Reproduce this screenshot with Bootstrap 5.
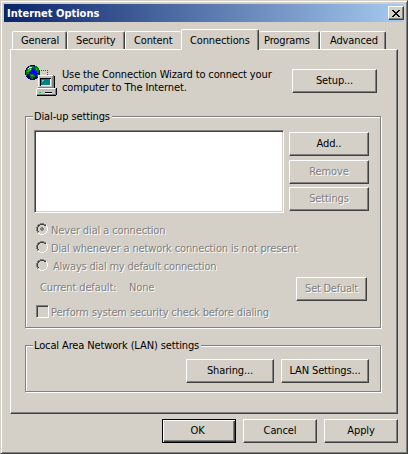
<!DOCTYPE html>
<html lang="en">
<head>
<meta charset="utf-8">
<meta name="viewport" content="width=device-width, initial-scale=1">
<title>Internet Options</title>
<link rel="stylesheet" href="https://cdn.jsdelivr.net/npm/bootstrap@5.3.0/dist/css/bootstrap.min.css">
<style>
:root{--face:#d4d0c8;--lo:#808080;--dk:#404040}
body{background:var(--face);color:#000;font:11px/13px "DejaVu Sans Condensed","Noto Sans",sans-serif;letter-spacing:-.13px;overflow:hidden}
.dialog-win{width:408px;height:454px;padding:3px;border:1px solid;border-color:var(--face) var(--dk) var(--dk) var(--face);box-shadow:inset 1px 1px #fff,inset -1px -1px var(--lo);white-space:nowrap}
.title-bar{height:18px;padding:0 0 0 3px;background:linear-gradient(90deg,#0a246a,#a6caf0);color:#fff;font-weight:700;letter-spacing:0}
.btn.face{flex:none;height:24px;width:80px;padding:0;border:1px solid;border-color:#fff var(--dk) var(--dk) #fff;border-radius:0;background:var(--face);color:#000;font-size:11px;line-height:20px;letter-spacing:-.13px;box-shadow:inset -1px -1px var(--lo)}
.btn.face:disabled,.off{color:var(--lo);opacity:1;text-shadow:1px 1px #fff}
.btn.face.closer{width:16px;height:14px;line-height:0}
.btn.face.w-setup{width:85px}
.btn.face.w-lan{width:88px}
.btn.face.w-foot{width:74px}
.btn.face.w-set{width:71px;letter-spacing:-.25px}
.btn.face.main{padding-right:3px;border-color:#000;box-shadow:inset 1px 1px #fff,inset -1px -1px var(--dk),inset -2px -2px var(--lo)}
.tab-strip{height:20px;margin:7px 0 0 8px}
.tab-strip .nav-link{flex:none;height:18px;padding:2px 0 0 8px;color:#000;border:1px solid;border-width:1px 1px 0;border-color:#fff var(--dk) #fff #fff;border-radius:2px 2px 0 0;background:var(--face);box-shadow:inset -1px 0 var(--lo);line-height:13px}
.tab-strip .nav-link.active{height:21px;margin-bottom:-1px;padding-top:4px;position:relative;z-index:1}
.t1{width:55px}.t2{width:58px}.t3{width:56px}.t4{width:78px}.t5{width:61px}.t6{width:66px}
.tab-strip .t3{box-shadow:none;border-right:0}
.tab-strip .t5{padding-left:5px;border-left:0}
.tab-strip .t6{padding-left:9px}
.sheet{width:388px;height:365px;margin-left:6px;padding:0 0 0 14px;border:1px solid;border-color:#fff var(--dk) var(--dk) #fff;box-shadow:inset -1px -1px var(--lo)}
.intro{height:66px;padding-top:15px}
.intro svg{flex:none;width:33px;height:32px;margin-right:4px}
.intro p{padding-top:3px}
.intro .w-setup{margin:4px 20px 0 0}
.group{width:356px;border:1px solid var(--lo);box-shadow:1px 1px #fff,inset 1px 1px #fff}
.group-name{width:max-content;height:13px;margin:-7px 0 0 7px;padding:0 2px 0 1px;background:var(--face)}
.g-dial{height:212px}
.well-row{margin:7px 0 0 8px}
.list-well{width:250px;height:83px;background:#fff;border:1px solid;border-color:var(--lo) #fff #fff var(--lo);box-shadow:inset 1px 1px var(--dk),inset -1px -1px var(--face)}
.side-keys{margin-left:5px;padding-top:2px;gap:4px}
.side-keys .btn:last-child{margin-top:-1px}
.choices{margin-top:7px}
.choice{height:18px;padding-left:10px}
.choice svg{width:12px;height:12px;margin-right:3px}
.choice span{padding-top:2px}
.choice .third{margin-left:2px;letter-spacing:-.2px}
.default-row{margin-top:3px;padding:0 13px 0 14px}
.default-row span{padding-top:4px}
.cur{width:89px}
.check-row{margin:4px 0 0 10px}
.check-row .caption-text{padding-top:1px}
.tick-box{width:13px;height:13px;margin-right:2px;border:1px solid;border-color:var(--lo) #fff #fff var(--lo);box-shadow:inset 1px 1px var(--dk)}
.g-lan{height:47px;margin-top:17px}
.lan-row{gap:7px;margin:7px 11px 0 0}
.foot-row{gap:7px;margin:5px 6px 0 0}
</style>
<script src="https://cdn.jsdelivr.net/npm/bootstrap@5.3.0/dist/js/bootstrap.bundle.min.js"></script>
</head>
<body>
<svg class="d-none">
 <symbol id="ring" viewBox="0 0 12 12">
  <g shape-rendering="crispEdges">
  <path fill="#808080" d="M4 0h4v1H4zM2 1h2v1H2zM8 1h2v1H8zM1 2h1v2H1zM0 4h1v4H0zM1 8h1v2H1z"/>
  <path fill="#404040" d="M4 1h4v1H4zM2 2h2v1H2zM8 2h2v1H8zM2 3h1v1H2zM1 4h1v4H1zM2 8h1v1H2z"/>
  <path fill="#fff" d="M10 2h1v2h-1zM11 4h1v4h-1zM10 8h1v2h-1zM8 10h2v1H8zM4 11h4v1H4zM2 10h2v1H2z"/>
  </g>
 </symbol>
</svg>
<div class="dialog-win">
 <div class="title-bar d-flex align-items-center">
  <span>Internet Options</span>
  <button class="btn face closer ms-auto d-flex align-items-center justify-content-center" aria-label="Close"><svg width="8" height="7" viewBox="0 0 8 7" shape-rendering="crispEdges"><path d="M0 0h2v1H0zM6 0h2v1H6zM1 1h2v1H1zM5 1h2v1H5zM2 2h4v1H2zM3 3h2v1H3zM2 4h4v1H2zM1 5h2v1H1zM5 5h2v1H5zM0 6h2v1H0zM6 6h2v1H6z"/></svg></button>
 </div>
 <nav class="nav tab-strip flex-nowrap align-items-end">
  <a class="nav-link t1">General</a><a class="nav-link t2">Security</a><a class="nav-link t3">Content</a><a class="nav-link t4 active">Connections</a><a class="nav-link t5">Programs</a><a class="nav-link t6">Advanced</a>
 </nav>
 <main class="sheet">
  <div class="intro d-flex">
   <svg viewBox="0 0 33 32" shape-rendering="crispEdges">
    <path fill="#000080" d="M5 0h5v1h2v1h1v1h1v2h1v5h-1v2h-1v1h-1v1h-2v1H5v-1H3v-1H2v-1H1v-2H0V5h1V3h1V2h1V1h2z"/>
    <path fill="#0000ff" d="M5 3h5v2h2v3h1v3h-2v2H6v-2H4V8H3V5h2z"/>
    <path fill="#008000" d="M4 1h5v2H7v2H6v2H4v2H2v2H1V5h1V3h2zM10 1h2v2h2v5h-2V6h-2V4H9V2h1zM5 9h4v1h1v2H8v2H6v-2H5zM12 9h2v1h-1v2h-1z"/>
    <path fill="#00d000" d="M4 3h2v1H4zM3 4h2v2H3zM2 6h2v1H2zM11 3h1v2h-1zM6 10h2v1H6z"/>
    <path fill="#fff" d="M4 2h3v1H4zM3 3h1v1H3zM5 4h1v1H5z"/>
    <path fill="#f00" d="M16 5h1v1h-1zM18 5h1v1h-1zM20 5h1v1h-1zM22 5h1v1h-1zM22 7h1v1h-1zM22 9h1v1h-1z"/>
    <path fill="#808080" d="M13 10h16v13H13z"/><path fill="#fff" d="M13 10h15v1H14v11h-1z"/><path fill="#c0c0c0" d="M14 11h13v11H14z"/>
    <path fill="#000" d="M29 11h1v12H15v-1h14zM15 13h11v1H16v7h-1z"/><path fill="#fff" d="M16 20h10v1H16zM25 14h1v7h-1z"/>
    <path fill="#008080" d="M16 14h9v6h-9z"/><path fill="#5fd0d0" d="M17 15h2v1h-1v1h-1z"/>
    <path fill="#808080" d="M13 22h16v1H13z"/><path fill="#c0c0c0" d="M11 24h19v6H11z"/><path fill="#fff" d="M12 23h18v1H12zM11 24h1v6h-1z"/>
    <path fill="#808080" d="M12 29h18v1H12zM30 24h1v6h-1z"/><path fill="#000" d="M12 30h19v1H12zM31 23h1v7h-1zM20 27h7v1h-7z"/>
    <path fill="#00e000" d="M14 27h2v1h-2z"/><path fill="#fff" d="M20 28h7v1h-7z"/>
   </svg>
   <p class="m-0">Use the Connection Wizard to connect your<br>computer to The Internet.</p>
   <button class="btn face w-setup ms-auto">Setup...</button>
  </div>
  <section class="group g-dial">
   <div class="group-name">Dial-up settings</div>
   <div class="d-flex well-row">
    <div class="list-well"></div>
    <div class="side-keys d-flex flex-column">
     <button class="btn face">Add..</button>
     <button class="btn face" disabled>Remove</button>
     <button class="btn face" disabled>Settings</button>
    </div>
   </div>
   <div class="choices off">
    <div class="choice d-flex align-items-center"><svg><use href="#ring"/><path fill="#808080" shape-rendering="crispEdges" d="M5 4h2v1h1v2H7v1H5V7H4V5h1z"/></svg><span>Never dial a connection</span></div>
    <div class="choice d-flex align-items-center"><svg><use href="#ring"/></svg><span>Dial whenever a network connection is not present</span></div>
    <div class="choice d-flex align-items-center"><svg><use href="#ring"/></svg><span class="third">Always dial my default connection</span></div>
   </div>
   <div class="d-flex default-row off"><span class="cur">Current default:</span><span>None</span><button class="btn face w-set ms-auto" disabled>Set Defualt</button></div>
   <div class="d-flex check-row off"><span class="tick-box"></span><span class="caption-text">Perform system security check before dialing</span></div>
  </section>
  <section class="group g-lan">
   <div class="group-name">Local Area Network (LAN) settings</div>
   <div class="d-flex justify-content-end lan-row"><button class="btn face w-lan">Sharing...</button><button class="btn face w-lan">LAN Settings...</button></div>
  </section>
 </main>
 <footer class="d-flex justify-content-end foot-row">
  <button class="btn face w-foot main">OK</button><button class="btn face w-foot">Cancel</button><button class="btn face w-foot">Apply</button>
 </footer>
</div>
</body>
</html>
